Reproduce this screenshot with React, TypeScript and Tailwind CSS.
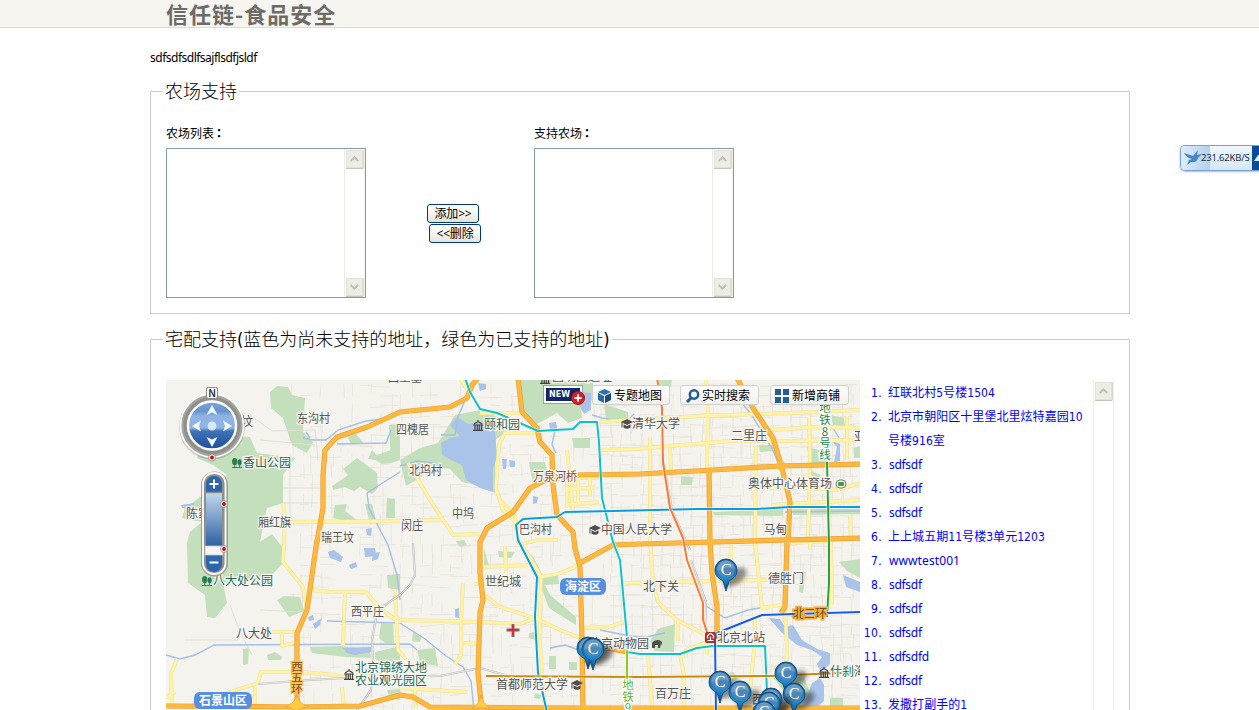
import React from "react";

const ADDRESSES = [
  "红联北村5号楼1504",
  "北京市朝阳区十里堡北里炫特嘉园10号楼916室",
  "sdfsdf",
  "sdfsdf",
  "sdfsdf",
  "上上城五期11号楼3单元1203",
  "wwwtest001",
  "sdfsdf",
  "sdfsdf",
  "sdfsdf",
  "sdfsdfd",
  "sdfsdf",
  "发撒打副手的1",
];

function addressStyle(address: string) {
  if (address.startsWith("s")) return "ml-[7px] w-[196px] font-['Noto_Sans',sans-serif] tracking-[-0.3px]";
  if (address.startsWith("w")) return "ml-[7px] w-[196px] font-['Noto_Sans',sans-serif] tracking-[0.1px]";
  return "ml-[6px] w-[197px] break-all tracking-[0.05px]";
}

function ScrollButton({ down = false }: { down?: boolean }) {
  return (
    <div className="flex h-[20px] w-[19px] shrink-0 items-center justify-center rounded-[2px] border border-white border-r-[#d9d8cf] border-b-[#c5c4ba] bg-[#eeede5] shadow-[inset_0_0_0_1px_#e3e2d8]">
      <svg width="9" height="6" viewBox="0 0 9 6">
        <path d={down ? "M0.7 1 L4.5 4.7 L8.3 1" : "M0.7 5 L4.5 1.3 L8.3 5"} fill="none" stroke="#bfbeb3" strokeWidth="2" />
      </svg>
    </div>
  );
}

function ListBox({ title }: { title: string }) {
  return (
    <div className="flex w-[200px] flex-col">
      <div className="h-[24px] leading-[26px]">
        {title}
        <span className="-ml-[1px] font-['Noto_Sans_CJK_TC',sans-serif] font-bold">：</span>
      </div>
      <div className="mt-[4px] flex h-[150px] justify-end border border-[#7f9db9] bg-white">
        <div className="flex w-[21px] flex-col items-center justify-between border-x border-[#eeede5] border-r-[#f2f1ea]">
          <ScrollButton />
          <ScrollButton down />
        </div>
      </div>
    </div>
  );
}

function XpButton({ children }: { children: React.ReactNode }) {
  return (
    <button className="flex h-[19px] w-[52px] items-center justify-center rounded-[3px] border border-[#003c74] bg-linear-to-b from-white via-[#f5f4ee] to-[#e6e3da] font-['Noto_Sans','Noto_Sans_CJK_SC',sans-serif] text-[12px] leading-none tracking-[-0.2px] whitespace-nowrap">
      {children}
    </button>
  );
}

/* All map coordinates below share the page's pixel space. */
const PARKS = [
  "203,495 227,475 213,465 197,458 205,435 250,437 257,453 295,458 283,475 283,503 267,508 260,542 272,534 283,548 283,563 270,577 223,583 227,603 215,618 207,617 205,595 188,583 187,543 190,532 202,522 182,518 185,508",
  "270,392 277,386 288,387 292,395 305,398 303,432 313,442 307,453 292,445 283,418 271,408",
  "455,415 480,410 500,418 507,432 495,440 495,493 484,487 462,482 450,469 432,466 420,478 406,486 400,460 420,448 438,443",
  "518,380 593,380 593,400 580,405 582,418 568,423 557,413 537,424 522,410",
  "343,469 357,458 377,473 378,488 372,494 360,487 354,491 345,487 333,490 332,486 341,480 348,475",
  "347,436 355,432 363,443 351,444", "372,450 377,455 391,450 391,463 382,464 375,460 368,459",
  "389,425 400,424 400,460 391,463", "335,505 347,504 345,511 357,520 345,521 333,518",
  "387,498 395,499 395,518 386,518", "365,504 372,504 376,520 370,524",
  "277,600 284,596 300,597 304,611 289,617",
  "310,647 342,646 370,650 371,658 345,657 312,653",
  "243,649 249,648 248,664 243,665", "267,655 275,652 282,657 281,660 268,660",
  "381,623 393,624 394,643 385,643 379,638", "375,652 400,646 400,660 384,663 375,659",
  "387,575 400,574 400,590 388,588", "413,632 422,636 420,642 412,641",
  "417,650 435,648 438,666 420,663", "387,690 400,689 400,700 390,699",
  "456,541 464,540 467,545 460,547", "484,548 489,566 484,568",
  "498,551 515,552 511,558 499,557", "521,550 533,556 543,576 558,574 559,584 545,585 550,595 576,617 576,625 549,608 543,592 529,565",
  "529,633 535,632 535,640 529,638", "549,656 556,656 556,669 549,669",
  "569,662 577,662 577,670 569,670", "535,693 542,695 540,699 534,698",
  "529,462 545,462 549,478 533,484", "572,438 590,438 590,448 574,448",
  "681,476 693,477 692,485 681,485", "713,512 783,509 783,516 714,515",
  "658,629 675,624 674,652 655,651 650,641", "800,572 806,572 803,593 799,592",
  "839,562 860,559 860,578 847,571", "720,675 733,672 739,678 733,681",
  "759,445 773,445 774,451 760,452", "793,509 860,508 860,514 793,515",
  "807,447 831,453 823,467 810,467", "810,470 820,475 821,480 812,476",
  "831,415 844,418 845,426 833,425", "854,448 860,446 860,458 854,458",
  "771,675 804,676 812,700 796,706", "830,698 843,698 843,710 830,710",
  "604,404 628,412 628,419 606,420", "658,380 672,380 671,387 659,387",
];

const WATER = [
  "457,417 468,424 481,422 495,429 497,457 493,469 493,492 480,488 466,480 462,465 453,461 442,455 441,443 450,438 460,436 450,425",
  "478,383 486,384 486,389 480,391", "549,423 556,422 557,429 550,430",
  "502,459 507,459 506,469 503,469", "509,460 515,461 515,467 510,467",
  "533,496 538,497 537,503 533,504", "328,552 334,550 343,557 341,562 330,558",
  "349,565 356,562 357,567 351,569", "364,548 375,548 376,556 365,557", "373,553 380,552 378,559 372,561",
  "308,617 313,615 314,620 309,621", "313,624 322,618 320,625 315,629", "366,529 372,528 371,536 367,535",
  "343,648 371,647 371,652 355,655 347,653", "455,609 459,608 459,618 455,617", "181,505 194,503 194,509 182,508",
  "769,618 780,619 785,627 793,625 802,640 817,649 830,653 830,664 821,672 817,664 822,657 812,650 797,645 781,632",
  "812,683 820,678 824,685 824,701 814,710 802,710", "843,575 860,582 860,592 846,587",
  "580,392 591,393 591,410 584,414 577,402", "831,440 840,444 840,461 834,462 837,447",
];

const STREAMS = [
  "303,438 313,440 326,440 338,430 366,421 390,418", "337,444 386,443 391,430", "306,432 310,438",
  "367,493 369,508 377,524 388,545 397,575 400,600", "367,493 400,472", "166,655 180,659 195,655 214,645 410,644 417,650",
  "400,623 425,639 446,656 463,667 471,681 474,710", "327,621 400,623", "468,393 458,417 455,435 441,435",
  "735,395 751,414 772,448 778,463", "706,606 725,618 748,610 760,608", "600,630 630,636 646,637 665,633",
  "550,648 565,645 579,650", "556,425 552,445 556,453", "830,423 839,438", "785,512 860,511",
  "592,415 602,418 626,422 634,414", "400,466 417,461 435,463",
];

const YELLOW = [
  "283,503 285,520 283,562 303,587 307,610", "291,522 400,521 442,520", "311,590 330,592 366,592 378,606 390,616 400,622", "345,592 343,645", "272,632 297,632", "282,631 282,646 300,641",
  "166,698 175,692", "214,697 258,683 261,672 300,672 335,675 350,678 370,676", "177,659 171,673 172,705", "255,687 255,708",
  "342,687 344,708", "408,463 430,500 453,535 480,534",
  "461,380 470,393", "480,413 520,413", "540,433 505,433 499,444 496,488 503,510 519,525", "567,450 573,510", "500,500 515,515 516,530",
  "518,545 538,540 558,540", "567,478 567,505 599,502", "567,478 599,478", "567,489 595,488", "578,475 578,505", "590,476 590,497", "600,450 637,449 670,446 732,441 790,441 860,440",
  "599,422 649,419 700,416 760,414 816,412 860,410", "650,437 650,540 653,582 658,602 675,619 704,634", "706,380 708,409 707,468", "670,448 671,469",
  "756,445 755,540 762,608 785,604", "809,418 810,460 808,540", "772,430 816,427 860,428", "847,416 847,460", "772,505 860,500", "850,515 851,540",
  "483,594 500,607 537,619 560,630 580,638", "480,622 520,624 541,616", "463,583 461,624 461,655 455,664", "400,620 480,622", "463,643 480,644",
  "483,567 530,565", "474,584 485,584", "540,577 557,574 573,568 580,563", "505,546 506,573", "517,540 530,557 541,577 540,617 540,642 542,673 545,708", "400,688 467,692", "415,690 416,708",
  "583,628 608,627 624,622", "625,583 713,581 768,580", "731,545 730,580", "785,607 787,650 785,685", "755,620 754,650 749,700",
  "648,656 652,706", "678,620 678,641", "680,655 684,675 684,708", "706,637 707,655", "686,658 686,650 707,642", "790,543 830,541 831,605", "810,542 810,550",
  "755,488 796,487 837,490 860,483", "831,542 832,604", "395,590 398,650 406,659",
];

const ORANGE = [
  "317,542 323,508 323,475 325,450 337,437 367,427 400,412 450,407 467,398 472,385 478,378",
  "317,540 307,610 297,633 297,710",
  "518,378 522,412 537,428 540,442 552,455 553,485 557,515 573,532 575,548 580,567 582,640 583,712",
  "550,478 530,488 513,512 487,528 480,542 480,573 483,600 480,613 478,673 482,712",
  "550,480 577,475 640,474 713,470 780,466 862,464",
  "737,378 753,408 773,438 782,468 790,502 788,542",
  "709,472 710,542 712,573 717,607 717,640",
  "580,563 613,545 640,544 862,538",
  "583,643 607,648 627,652",
  "787,543 785,607 781,613",
  "166,706 297,707 360,706 400,695 413,697 430,707 583,708 862,708",
];

const RAIL = ["400,595 385,605 376,618 372,640 373,660 371,690 350,720", "400,595 410,585 415,575 413,543", "258,684 310,680 345,678", "365,677 440,676 480,668 505,675", "691,560 706,602 705,630", "663,460 672,510 690,550"];

const METRO: [string, string][] = [
  ["465,378 470,392 480,409 497,413 538,431 573,429 580,422 597,422 599,442 602,498 613,542 620,560 627,637", "#0bc2c8"],
  ["627,652 640,654 680,654 697,648 713,646 765,646 767,692", "#0bc2c8"],
  ["547,712 538,673 535,617 537,577 518,540 516,525 523,519 557,517 565,512 613,511 697,509 757,509 790,507 862,507", "#0a9dd9"],
  ["657,378 662,408 663,462 670,508 683,538 687,560 703,603 703,620 708,635", "#fa7935"],
  ["827,462 829,545 829,583 827,617", "#2fa03a"],
  ["862,612 762,615 717,633 715,640 716,712", "#175ce6"],
  ["486,676 640,677 770,676 862,672", "#c88912"],
  ["627,637 627,712", "#87cf24"],
];

/* Fine residential streets, built from a fixed seed. */
const LANES = (() => {
  let seed = 71;
  const rnd = () => {
    seed = (seed * 16807) % 2147483647;
    return seed / 2147483647;
  };
  let d = "";
  for (let x = 290; x < 860; x += 10) {
    for (let y = 384; y < 710; y += 10) {
      const density = x > 600 ? 0.6 : 0.3;
      if (rnd() < density) d += `M${x + rnd() * 4} ${y}l${rnd() * 2 - 1} ${8 + rnd() * 14}`;
      if (rnd() < density) d += `M${x} ${y + rnd() * 4}l${8 + rnd() * 14} ${rnd() * 2 - 1}`;
    }
  }
  return d;
})();

type Label = [string, number, number, number?, string?];
const GREY = "#555555";
const TEAL = "#236a5b";
const LABELS: Label[] = [
  ["王坟", 229, 426, 24], ["东沟村", 297, 423, 33], ["香山公园", 243, 467, 48, TEAL], ["四槐居", 396, 434, 33],
  ["北坞村", 409, 475, 33], ["陈家沟", 186, 518, 36], ["厢红旗", 258, 527, 33], ["瑞王坟", 321, 542, 33],
  ["中坞", 452, 518, 22], ["闵庄", 401, 530, 22], ["颐和园", 484, 429, 36, TEAL], ["圆明园遗址", 552, 381, 60, TEAL],
  ["四王墓", 388, 382, 34], ["清华大学", 632, 428, 48], ["二里庄", 731, 440, 36], ["亚", 854, 441, 12],
  ["万泉河桥", 533, 481, 44, "#895024"], ["巴沟村", 519, 534, 33], ["中国人民大学", 601, 534, 71], ["马甸", 764, 534, 23],
  ["奥体中心体育场", 748, 488, 84], ["世纪城", 485, 586, 36], ["北下关", 643, 591, 36], ["德胜门", 768, 583, 36],
  ["八大处公园", 213, 585, 60, TEAL], ["八大处", 236, 638, 36], ["西平庄", 351, 616, 33], ["北京锦绣大地", 355, 672, 72, TEAL],
  ["农业观光园区", 355, 685, 72, TEAL], ["北京动物园", 589, 648, 60], ["北京北站", 717, 642, 48], ["首都师范大学", 496, 689, 72],
  ["百万庄", 655, 698, 36], ["什刹海", 830, 676, 36, TEAL], ["西四", 752, 704, 24],
];

function VerticalLabel({ chars, x, y, step, fill, halo }: { chars: string; x: number; y: number; step: number; fill: string; halo: string }) {
  return (
    <g fill={fill} stroke={halo} strokeWidth="2.5" paintOrder="stroke" fontSize="11.5" textAnchor="middle">
      {chars.split("").map((c, i) => (
        <text key={i} x={x} y={y + i * step}>{c}</text>
      ))}
    </g>
  );
}

function Pin({ x, y }: { x: number; y: number }) {
  return (
    <g transform={`translate(${x} ${y})`}>
      <ellipse cx="9" cy="7" rx="13" ry="7" transform="rotate(-35 9 7)" fill="#222222" opacity=".5" filter="url(#soft)" />
      <path d="M-11 0a11 11 0 1 1 22 0C11 7 6 9 3 11L0 21L-3 11C-6 9-11 7-11 0Z" fill="url(#pinBody)" stroke="#0b3f6e" strokeWidth=".8" />
      <circle r="8.8" cy="-1" fill="#4c87b8" />
      <path d="M-8.800-1a8.800 8.800 0 0 1 17.600 0Q0-5-8.800 1Z" fill="#86b1d2" opacity=".5" />
      <text y="4.5" textAnchor="middle" fontSize="16" fill="#ffffff" fontFamily="Liberation Serif, serif">C</text>
    </g>
  );
}

function Hat({ x, y }: { x: number; y: number }) {
  return (
    <g transform={`translate(${x} ${y})`} fill="#4f4f4f">
      <path d="M0 3L6 0L12 3L6 6Z" />
      <path d="M2.5 5.2V8.5Q6 11 9.5 8.5V5.2L6 7Z" />
      <path d="M.5 3V8.5H1.5V3Z" />
    </g>
  );
}

function Pavilion({ x, y }: { x: number; y: number }) {
  return (
    <g transform={`translate(${x} ${y})`} stroke="#444444" fill="none" strokeWidth="1.2">
      <path d="M5 0V2M1 4L5 1.5L9 4M0 5H10M2 5V10M4.3 5V10M6.3 5V10M8.5 5V10M0 10.4H10" />
    </g>
  );
}

function Trees({ x, y }: { x: number; y: number }) {
  return (
    <g transform={`translate(${x} ${y})`}>
      <ellipse cx="2.7" cy="3.6" rx="2.7" ry="3.6" fill="#278749" />
      <ellipse cx="7.6" cy="4.2" rx="2" ry="3" fill="#2a7562" />
      <path d="M2.7 4V9.5M7.6 5V9.5M0 9.5H10" stroke="#4f6c50" strokeWidth=".9" />
    </g>
  );
}

function RedDot({ x, y }: { x: number; y: number }) {
  return (
    <g>
      <circle cx={x} cy={y} r="3.500" fill="#ffffff" stroke="#888888" strokeWidth=".8" />
      <circle cx={x} cy={y} r="2" fill="#bd1111" />
    </g>
  );
}

function District({ x, y, w, name }: { x: number; y: number; w: number; name: string }) {
  return (
    <g>
      <rect x={x} y={y} width={w} height="17" rx="6" fill="#568fe2" />
      <text x={x + w / 2} y={y + 13} textAnchor="middle" fontSize="12" fontWeight="700" fill="#ffffff">{name}</text>
    </g>
  );
}

function MapDrawing() {
  return (
    <svg className="block h-[330px] w-[694px]" viewBox="166 380 694 330" fontFamily="'Noto Sans CJK SC', sans-serif">
      <defs>
        <filter id="soft" x="-50%" y="-50%" width="200%" height="200%"><feGaussianBlur stdDeviation="2" /></filter>
        <linearGradient id="pinBody" x1="0" y1="0" x2="0" y2="1">
          <stop offset="0" stopColor="#155b92" /><stop offset=".6" stopColor="#1d8bcf" /><stop offset="1" stopColor="#08477a" />
        </linearGradient>
        <linearGradient id="dial" x1="0" y1="0" x2="0" y2="1">
          <stop offset="0" stopColor="#7fa5d8" /><stop offset=".2" stopColor="#6793cc" /><stop offset=".3" stopColor="#8fb3e2" /><stop offset=".55" stopColor="#8fb3e2" /><stop offset=".62" stopColor="#3f71b7" /><stop offset="1" stopColor="#1e4f9b" />
        </linearGradient>
        <linearGradient id="track" x1="0" y1="0" x2="0" y2="1">
          <stop offset="0" stopColor="#c2d8ec" /><stop offset="1" stopColor="#1b4f98" />
        </linearGradient>
      </defs>
      <rect x="166" y="380" width="694" height="330" fill="#f5f3ee" />
      <path d={LANES} fill="none" stroke="#e7e3d9" strokeWidth=".8" />
      <g fill="#c4dfbb">{PARKS.map((p, i) => <polygon key={i} points={p} />)}</g>
      <path d="M250 415L272 431L315 430L318 460M260 440L315 445M283 488H320M283 503H318M290 458V521M230 605L240 632L252 655M185 640H238M260 610L300 612" fill="none" stroke="#e3dfd6" />
      <g fill="#aac3e8">{WATER.map((p, i) => <polygon key={i} points={p} />)}</g>
      <g fill="none" stroke="#a4c0e5" strokeWidth="1.400">{STREAMS.map((p, i) => <polyline key={i} points={p} />)}</g>
      <g fill="none" strokeLinejoin="round">
        {YELLOW.map((p, i) => <polyline key={i} points={p} stroke="#ecdfa0" strokeWidth="3.800" />)}
        {YELLOW.map((p, i) => <polyline key={i} points={p} stroke="#fff3a6" strokeWidth="2.800" />)}
        {RAIL.map((p, i) => <polyline key={i} points={p} stroke="#bcbcbc" strokeWidth="2.200" />)}
        {RAIL.map((p, i) => <polyline key={i} points={p} stroke="#f5f5f5" strokeWidth=".8" />)}
        {ORANGE.map((p, i) => <polyline key={i} points={p} stroke="#e9a132" strokeWidth="5.200" />)}
        {ORANGE.map((p, i) => <polyline key={i} points={p} stroke="#fdb840" strokeWidth="3.800" />)}
        {METRO.map(([p, c], i) => (
          <g key={i}>
            <polyline points={p} stroke="#ffffff" strokeOpacity=".6" strokeWidth="3.400" />
            <polyline points={p} stroke={c} strokeWidth="2" />
          </g>
        ))}
      </g>
      <path d="M297 695Q299 704 309 707Q299 707 297 712Q293 707 285 707Q295 703 297 695ZM481 695Q480 704 472 708H490Q483 704 481 695Z" fill="#fdca43" stroke="#e6a52c" strokeWidth=".7" />
      <path d="M780 456Q779 464 772 467Q779 467 782 474Q783 467 790 466Q782 463 780 456Z" fill="#fdb840" />
      <g fontSize="12" stroke="#f8f6f1" strokeWidth="2.500" paintOrder="stroke">
        {LABELS.map(([t, x, y, w, c], i) => (
          <text key={i} x={x} y={y} fill={c ?? GREY} textLength={w} lengthAdjust="spacingAndGlyphs">{t}</text>
        ))}
      </g>
      <VerticalLabel chars="西五环" x={297} y={671} step={11} fill="#75501e" halo="#f7bd56" />
      <VerticalLabel chars="地铁8号线" x={825} y={412} step={11.8} fill="#228b43" halo="#ffffff" />
      <VerticalLabel chars="地铁9" x={628} y={689} step={11.6} fill="#61b22b" halo="#ffffff" />
      <text x="793" y="618" fontSize="12" textLength="34" fill="#74501e" stroke="#f4ad37" strokeWidth="3" paintOrder="stroke">北二环</text>
      <District x={194} y={692} w={58} name="石景山区" />
      <District x={560} y={578} w={46} name="海淀区" />
      <Hat x={621} y={419} /><Hat x={589} y={525} /><Hat x={571} y={680} />
      <Pavilion x={473} y={420} /><Pavilion x={540} y={373} /><Pavilion x={344} y={669} /><Pavilion x={819} y={667} />
      <Trees x={232} y={458} /><Trees x={202} y={576} />
      <path d="M652 648V643Q654 640 658 640Q663 640 662 646L661 643L660 648H658V645H655V648Z" fill="#4e4e4e" />
      <rect x="836" y="480" width="10" height="8" rx="4" fill="#fffef9" stroke="#777" /><rect x="838" y="482" width="6" height="4" rx="1" fill="#39a144" />
      <rect x="705" y="632" width="11" height="11" rx="2" fill="#ad2d31" />
      <path d="M708 638.5A3 3 0 1 1 713 638.5M707.5 640.5H713.5M710.5 636.5V640" stroke="#ffffff" fill="none" strokeWidth="1.200" />
      <path d="M513 624V637M506.500 630H519.500" stroke="#777777" strokeWidth="3" /><path d="M513 624.500V635.500M507.500 630H518.500" stroke="#d22f38" strokeWidth="2" />
      <Pin x={726} y={570} /><Pin x={588} y={648} /><Pin x={593} y={649} />
      <Pin x={786} y={673} /><Pin x={720} y={682} /><Pin x={740} y={692} /><Pin x={794} y={694} /><Pin x={771} y={699} /><Pin x={769} y={703} /><Pin x={764} y={712} />
      <g>
        <circle cx="212" cy="426.500" r="33" fill="#777777" opacity=".35" />
        <circle cx="212" cy="425.500" r="31.500" fill="#a4a59d" stroke="#ffffff" strokeWidth="1.700" />
        <circle cx="212" cy="425.500" r="27" fill="none" stroke="#8f908b" strokeWidth="3" />
        <circle cx="212" cy="425.500" r="24" fill="url(#dial)" stroke="#ffffff" strokeWidth="2.300" />
        <circle cx="212" cy="426" r="4.500" fill="#d5e9fb" />
        <path d="M212 405L206.500 415L212 412.500L217.500 415ZM212 447L206.500 437L212 439.500L217.500 437ZM192 426L201 420.500L199 426L201 431.500ZM232 426L223 420.500L225 426L223 431.500Z" fill="#f1f7ff" />
        <rect x="206.500" y="387.500" width="11" height="11" rx="2" fill="#ffffff" stroke="#858585" />
        <text x="212" y="396.500" fontSize="10" fontWeight="700" textAnchor="middle" fontFamily="Liberation Sans, sans-serif" fill="#333333">N</text>
        <RedDot x={212} y={457.5} />
        <rect x="201" y="471.500" width="27" height="105" rx="13.500" fill="#8e8f89" opacity=".8" />
        <rect x="203" y="473" width="22.500" height="101" rx="11" fill="#8f908b" stroke="#ffffff" strokeWidth="1.800" />
        <rect x="206" y="476" width="16" height="96" rx="8" fill="#2e66ae" />
        <rect x="206" y="493" width="16" height="60" fill="url(#track)" />
        <path d="M206 492.500H222" stroke="#8c8c88" strokeWidth="1.500" />
        <rect x="205" y="546" width="18" height="9" fill="#f5f5f3" stroke="#c8c8c4" strokeWidth=".8" />
        <path d="M209.500 484H218.500M214 479.500V488.500M209.500 562.500H218.500" stroke="#ffffff" strokeWidth="2" />
        <RedDot x={224} y={504} /><RedDot x={224} y={549} />
      </g>
    </svg>
  );
}

function MapTool({ icon, label, className }: { icon: React.ReactNode; label: string; className: string }) {
  return (
    <button className={`flex h-[20px] items-center gap-[2px] rounded-[3px] border border-[#d1d1cd] bg-linear-to-b from-white to-[#f1f0ed] pt-px pl-[4px] text-[12px] leading-none whitespace-nowrap ${className}`}>
      {icon}
      {label}
    </button>
  );
}

export default function App() {
  return (
    <div className="relative h-[710px] overflow-hidden bg-[#fefefe] font-['DejaVu_Sans_Condensed','Noto_Sans_CJK_SC',sans-serif] text-[12px] text-black">
      <header className="h-[28px] border-b border-[#dcdcd6] bg-[#f6f5f0] pl-[166px]">
        <h1 className="font-['Noto_Sans_CJK_SC',sans-serif] text-[22px] leading-[27px] font-bold tracking-[1px] text-[#6c6b68]">信任链-食品安全</h1>
      </header>
      <main className="ml-[150px] flex w-[980px] flex-col">
        <p className="mt-[18px] h-[24px] font-['Noto_Sans',sans-serif] leading-[24px] tracking-[-0.5px]">sdfsdfsdlfsajflsdfjsldf</p>
        <fieldset className="mt-[9px] h-[235px] border border-[#cccccc] pl-[12px]">
          <legend className="h-[24px] px-[2px] text-[18px] leading-[26px] font-light">农场支持</legend>
          <div className="flex pt-[17px] pl-[3px]">
            <ListBox title="农场列表" />
            <div className="ml-[61px] flex w-[107px] flex-col gap-px pt-[84px]">
              <XpButton>添加&gt;&gt;</XpButton>
              <div className="pl-[2px]"><XpButton>&lt;&lt;删除</XpButton></div>
            </div>
            <ListBox title="支持农场" />
          </div>
        </fieldset>
        <fieldset className="mt-[13px] h-[500px] border border-[#cccccc] pl-[12px]">
          <legend className="h-[24px] px-[2px] text-[18px] leading-[26px] font-light whitespace-nowrap">宅配支持(蓝色为尚未支持的地址，绿色为已支持的地址)</legend>
          <div className="flex pt-[29px] pl-[3px]">
            <div className="relative h-[330px] w-[694px] shrink-0 overflow-hidden">
              <MapDrawing />
              <div className="absolute top-[6px] left-[378px] flex h-[17px] w-[38px] items-center border-2 border-white bg-[#11256c] pl-[3px] font-['DejaVu_Sans',sans-serif] text-[8px] leading-none font-bold text-white shadow-[0_0_0_1px_#8aa4c8]">NEW</div>
              <svg className="absolute top-[11px] left-[405px]" width="14" height="14" viewBox="0 0 14 14"><circle cx="7" cy="7" r="6.500" fill="#d62326" stroke="#a51212" /><path d="M7 3.500V10.500M3.500 7H10.500" stroke="#fff" strokeWidth="2" /></svg>
              <MapTool className="absolute top-[5px] left-[426px] w-[78px]" label="专题地图" icon={<svg width="15" height="14" viewBox="0 0 15 14"><path d="M1 3L7.500 0L14 3L7.500 6Z" fill="#2675af" /><path d="M1 4L7 7V14L1 11Z" fill="#276ca6" /><path d="M8 7L14 4V11L8 14Z" fill="#154b7e" /></svg>} />
              <MapTool className="absolute top-[5px] left-[514px] w-[79px]" label="实时搜索" icon={<svg width="15" height="14" viewBox="0 0 15 14"><circle cx="9" cy="5.500" r="4.200" fill="none" stroke="#205d98" strokeWidth="2.500" /><path d="M6 9L2 13" stroke="#205d98" strokeWidth="3" /></svg>} />
              <MapTool className="absolute top-[5px] left-[604px] w-[79px]" label="新增商铺" icon={<svg width="15" height="14" viewBox="0 0 15 14"><path d="M0 0H6V6H0ZM8 0H14V6H8ZM0 8H6V14H0ZM8 8H14V14H8Z" fill="#245d98" /></svg>} />
            </div>
            <ol className="h-[330px] w-[233px] overflow-hidden pt-px text-[#0000ff]">
              {ADDRESSES.map((address, i) => (
                <li key={i} className="flex leading-[24px]">
                  <span className="w-[22px] shrink-0 text-right tracking-[0.4px] whitespace-nowrap">{i + 1}.</span>
                  <span className={addressStyle(address)}>{address}</span>
                </li>
              ))}
            </ol>
            <div className="flex h-[330px] w-[21px] flex-col items-center border-x border-[#efeee7] pt-px">
              <ScrollButton />
            </div>
          </div>
        </fieldset>
      </main>
      <aside className="absolute top-[145px] left-[1180px] flex h-[26px] w-[79px] items-center overflow-hidden rounded-l-[5px] border border-r-0 border-[#78a1d0] bg-linear-to-b from-[#f0f8ff] to-[#d4e7f8] shadow-[0_1px_2px_#b7bdc3]">
        <div className="flex h-full w-[29px] shrink-0 items-center bg-linear-to-r from-[#dcecfa] to-[#b3d1ee] pl-[3px]">
          <svg width="18" height="18" viewBox="0 0 18 18"><path d="M0 4L9 7L14 1L13 6L18 5L14 9Q13 14 7 13L3 16L5 11L8 10Q3 9 0 4Z" fill="#4387c5" /></svg>
        </div>
        <span className="-ml-[9px] w-[51px] shrink-0 font-['Noto_Sans',sans-serif] text-[9.5px] tracking-[-0.2px] whitespace-nowrap text-[#24323d]">231.62KB/S</span>
        <div className="flex h-[26px] w-[8px] shrink-0 items-center bg-[#0b4b9c]"><svg width="8" height="8" viewBox="0 0 8 8"><path d="M2 7L6 1H8V7Z" fill="#d9eeff" /></svg></div>
      </aside>
    </div>
  );
}
